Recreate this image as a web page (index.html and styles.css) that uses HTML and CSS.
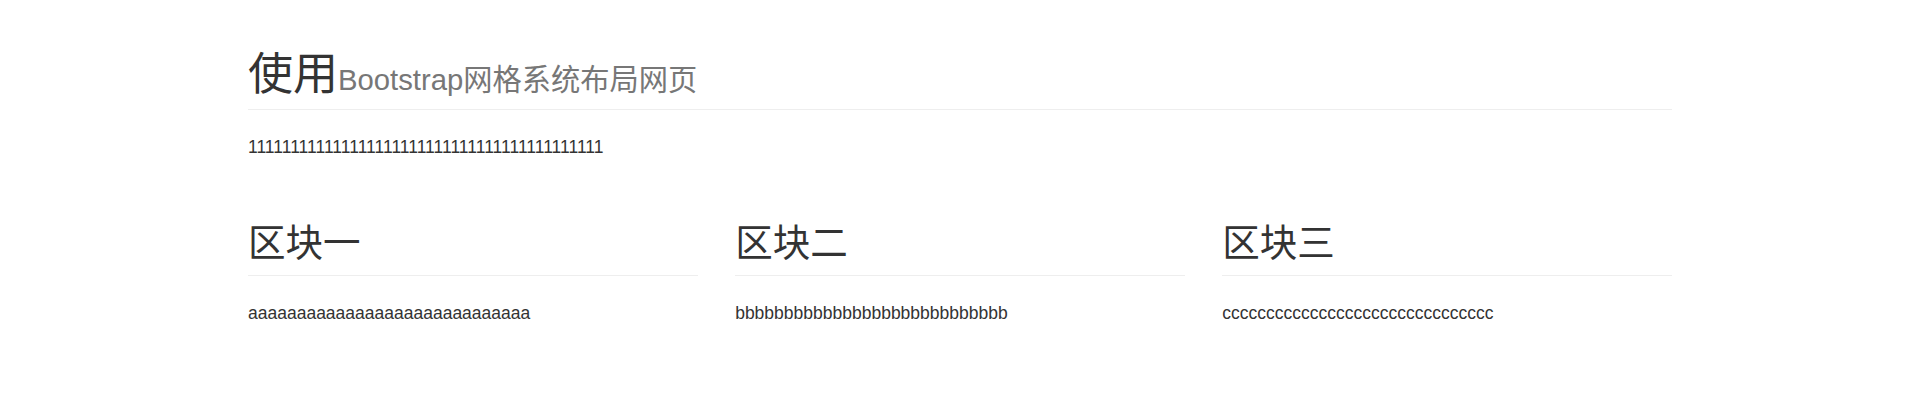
FILE: index.html
```html
<!DOCTYPE html>
<html lang="zh-CN">
<head>
  <meta charset="UTF-8">
  <title>使用Bootstrap网格系统布局网页</title>
  <link rel="stylesheet" href="styles.css">
</head>
<body>
  <div class="container">
    <h1 class="page-header">使用<small>Bootstrap网格系统布局网页</small></h1>
    <p>111111111111111111111111111111111111111111</p>
    <div class="row">
      <div class="col">
        <h2 class="page-header">区块一</h2>
        <p>aaaaaaaaaaaaaaaaaaaaaaaaaaaaa</p>
      </div>
      <div class="col">
        <h2 class="page-header">区块二</h2>
        <p>bbbbbbbbbbbbbbbbbbbbbbbbbbbb</p>
      </div>
      <div class="col">
        <h2 class="page-header">区块三</h2>
        <p>ccccccccccccccccccccccccccccccc</p>
      </div>
    </div>
  </div>
</body>
</html>
```

FILE: styles.css
```css
html, body {
  margin: 0; padding: 0;
  background: #fff;
}
body {
  font-family: "Liberation Sans", "Noto Sans CJK SC", sans-serif;
  font-size: 17.5px;
  line-height: 25px;
  color: #333;
}

.container {
  width: 1424px;
  margin-left: 248px;
}

h1, h2 {
  font-weight: normal;
  line-height: 1.1;
  margin: 0;
}
h1 { font-size: 45px; }
h2 { font-size: 37.5px; }

h1 small {
  font-size: 65%;
  font-weight: normal;
  line-height: 1;
  color: #777;
}

.page-header {
  margin: 50px 0 25px;
  padding-bottom: 9.5px;
  border-bottom: 1px solid #eee;
}
h2.page-header { padding-bottom: 11.25px; }

p { margin: 0 0 12.5px; }

/* three equal columns */
.row {
  display: grid;
  grid-template-columns: 1fr 1fr 1fr;
  column-gap: 37.5px;
}
.col { min-width: 0; }
```
